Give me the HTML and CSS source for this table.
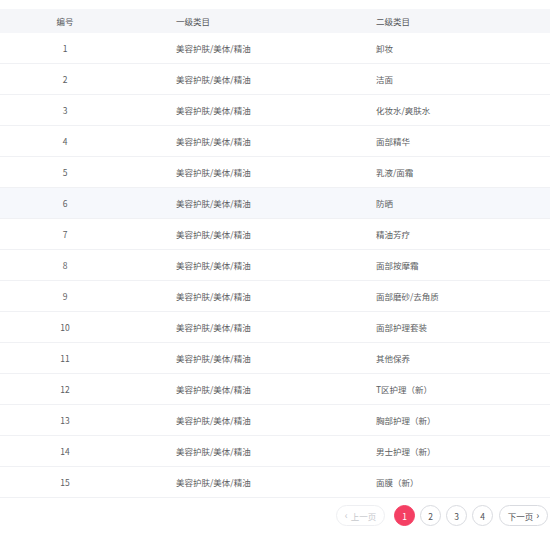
FILE: index.html
```html
<!DOCTYPE html>
<html>
<head>
<meta charset="utf-8">
<link rel="stylesheet" href="styles.css">
</head>
<body>
<div class="page">
  <div class="table">
    <div class="row head">
      <div class="c1">编号</div><div class="c2">一级类目</div><div class="c3">二级类目</div>
    </div>
    <div class="row"><div class="c1">1</div><div class="c2">美容护肤/美体/精油</div><div class="c3">卸妆</div></div>
    <div class="row"><div class="c1">2</div><div class="c2">美容护肤/美体/精油</div><div class="c3">洁面</div></div>
    <div class="row"><div class="c1">3</div><div class="c2">美容护肤/美体/精油</div><div class="c3">化妆水/爽肤水</div></div>
    <div class="row"><div class="c1">4</div><div class="c2">美容护肤/美体/精油</div><div class="c3">面部精华</div></div>
    <div class="row"><div class="c1">5</div><div class="c2">美容护肤/美体/精油</div><div class="c3">乳液/面霜</div></div>
    <div class="row hover"><div class="c1">6</div><div class="c2">美容护肤/美体/精油</div><div class="c3">防晒</div></div>
    <div class="row"><div class="c1">7</div><div class="c2">美容护肤/美体/精油</div><div class="c3">精油芳疗</div></div>
    <div class="row"><div class="c1">8</div><div class="c2">美容护肤/美体/精油</div><div class="c3">面部按摩霜</div></div>
    <div class="row"><div class="c1">9</div><div class="c2">美容护肤/美体/精油</div><div class="c3">面部磨砂/去角质</div></div>
    <div class="row"><div class="c1">10</div><div class="c2">美容护肤/美体/精油</div><div class="c3">面部护理套装</div></div>
    <div class="row"><div class="c1">11</div><div class="c2">美容护肤/美体/精油</div><div class="c3">其他保养</div></div>
    <div class="row"><div class="c1">12</div><div class="c2">美容护肤/美体/精油</div><div class="c3">T区护理（新）</div></div>
    <div class="row"><div class="c1">13</div><div class="c2">美容护肤/美体/精油</div><div class="c3">胸部护理（新）</div></div>
    <div class="row"><div class="c1">14</div><div class="c2">美容护肤/美体/精油</div><div class="c3">男士护理（新）</div></div>
    <div class="row"><div class="c1">15</div><div class="c2">美容护肤/美体/精油</div><div class="c3">面膜（新）</div></div>
  </div>
  <div class="pager">
    <span class="btn prev"><span class="arr">‹</span>上一页</span>
    <span class="num active">1</span>
    <span class="num">2</span>
    <span class="num">3</span>
    <span class="num">4</span>
    <span class="btn next">下一页<span class="arr">›</span></span>
  </div>
</div>
</body>
</html>
```
FILE: styles.css
```css
html, body {
  margin: 0;
  padding: 0;
  background: #fff;
}
body {
  font-family: "Noto Sans CJK SC", "Microsoft YaHei", sans-serif;
  font-size: 8.5px;
  color: #5c5e62;
}
.page {
  padding-top: 9px;
  width: 550px;
}
.table {
  display: flex;
  flex-direction: column;
}
.row {
  display: grid;
  grid-template-columns: 130px 200px 1fr;
  align-items: center;
  height: 31px;
  box-sizing: border-box;
  border-bottom: 1px solid #f0f1f4;
}
.row.head {
  height: 24px;
  background: #f5f6f9;
  color: #55575b;
  border-bottom: none;
}
.row.hover {
  background: #f6f8fc;
}
.c1 {
  text-align: center;
}
.c2, .c3 {
  padding-left: 46px;
}
.pager {
  display: flex;
  justify-content: flex-end;
  align-items: center;
  gap: 5px;
  padding: 7px 2px 0 0;
}
.num, .btn {
  height: 21px;
  box-sizing: border-box;
  border: 1px solid #d9dbe0;
  border-radius: 11px;
  display: flex;
  align-items: center;
  justify-content: center;
  color: #505256;
  font-size: 8.5px;
  white-space: nowrap;
}
.num {
  width: 21px;
}
.num.active {
  background: #f43f63;
  border-color: #f43f63;
  color: #fff;
}
.btn {
  width: 49px;
  gap: 3px;
}
.arr {
  font-size: 10px;
  line-height: 1;
  margin-top: -1px;
}
.btn.prev {
  color: #c7c9cd;
  border-color: #eeeff2;
  margin-right: 4px;
}
.btn.next {
  margin-left: 1px;
}
```
